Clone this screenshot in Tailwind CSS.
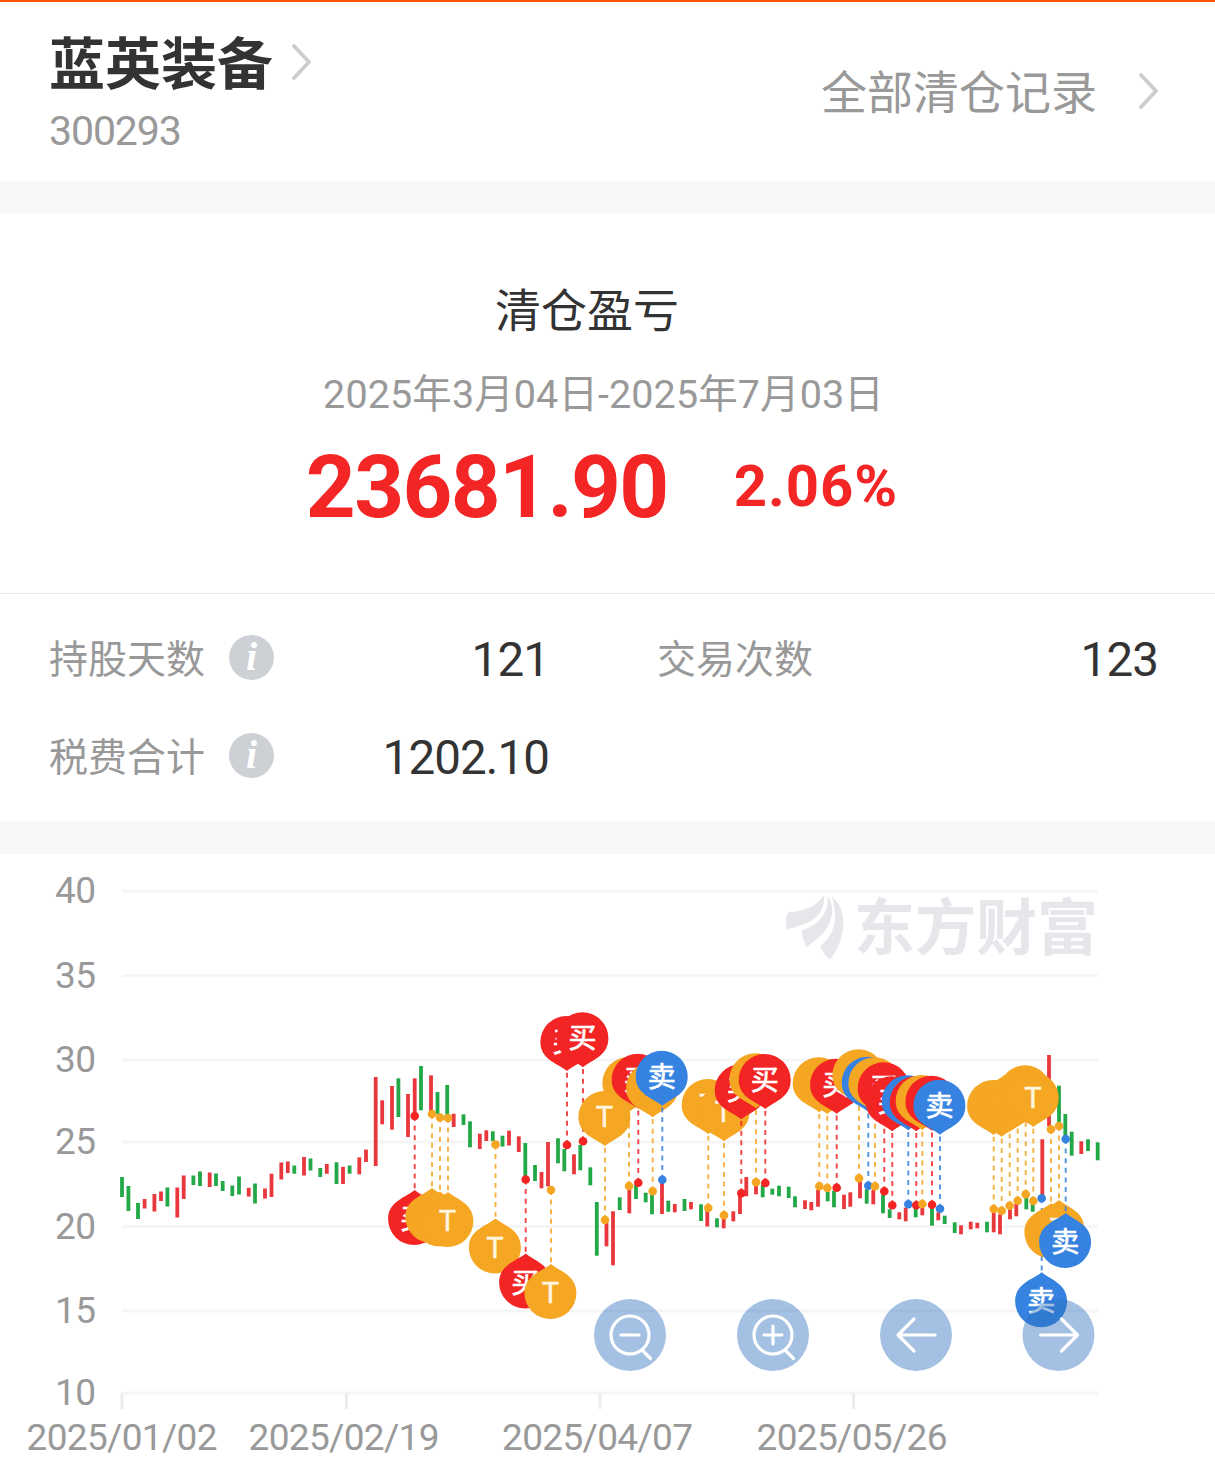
<!DOCTYPE html>
<html lang="zh-CN">
  <head>
    <meta charset="UTF-8" />
    <meta name="viewport" content="width=device-width, initial-scale=1.0" />
    <title>蓝英装备 300293</title>
    <script src="https://cdn.jsdelivr.net/npm/@tailwindcss/browser@4"></script>
  </head>
  <body class="bg-white text-[#333333] font-['Roboto','Noto_Sans_CJK_SC',sans-serif]">
    <header class="h-[181px] border-t-2 border-[#ff5500] pl-[49px] pr-[56px] flex justify-between">
      <div class="pt-[28px]">
        <a href="#" class="flex items-center gap-[19px]">
          <h1 class="text-[56px] leading-[60px] font-bold font-['Noto_Sans_CJK_SC',sans-serif]">蓝英装备</h1>
          <svg class="w-[20px] h-[36px] mt-1" viewBox="0 0 20 36" fill="none" stroke="#cccccc" stroke-width="3.8">
            <path d="M2 2 17 18 2 34" stroke-linecap="round" stroke-linejoin="round" />
          </svg>
        </a>
        <p class="mt-[16px] text-[41px] leading-[50px] tracking-[-1.1px] text-[#999999]">300293</p>
      </div>
      <a href="#" class="h-[178px] flex items-center gap-[42px] text-[#999999]">
        <span class="-mt-1 text-[46px] leading-[46px] font-['Noto_Sans_CJK_SC',sans-serif]">全部清仓记录</span>
        <svg class="w-[20px] h-[36px]" viewBox="0 0 20 36" fill="none" stroke="#cccccc" stroke-width="3.8">
          <path d="M2 2 17 18 2 34" stroke-linecap="round" stroke-linejoin="round" />
        </svg>
      </a>
    </header>

    <div class="h-8 bg-[#f7f7f7]"></div>

    <section class="h-[381px] border-b border-[#ececec] flex flex-col items-center pt-[69px]">
      <h2 class="mr-[41px] text-[46px] leading-[50px] font-['Noto_Sans_CJK_SC',sans-serif]">清仓盈亏</h2>
      <p class="mr-[8px] mt-[38px] text-[39.5px] leading-[50px] tracking-[0.1px] text-[#999999] whitespace-nowrap">2025年3月04日-2025年7月03日</p>
      <div class="mr-[11px] mt-[19px] flex items-center gap-[66px] text-[#f32525] font-bold">
        <span class="text-[87px] leading-[96px] tracking-[-1.6px]">23681.90</span>
        <span class="-mt-[3px] text-[58px] leading-[96px] tracking-[1px]">2.06%</span>
      </div>
    </section>

    <section class="h-[227px] pl-[49px] pr-[50px] pt-[14px] flex flex-col">
      <div class="flex h-[98px] items-center">
        <div class="w-[500px] flex items-center">
          <span class="mt-[5px] text-[39px] leading-[50px] text-[#999999]">持股天数</span>
          <span class="ml-[24px] size-[45px] rounded-full bg-[#cdd0d5] flex items-center justify-center text-white text-[40px] leading-[40px] font-bold italic font-['Liberation_Serif',serif]">i</span>
          <span class="ml-auto mt-[5px] text-[47.5px] leading-[50px] tracking-[-0.9px]">121</span>
        </div>
        <div class="ml-[108px] flex-1 flex items-center justify-between">
          <span class="mt-[5px] text-[39px] leading-[50px] text-[#999999]">交易次数</span>
          <span class="mt-[5px] mr-[7px] text-[47.5px] leading-[50px] tracking-[-0.9px]">123</span>
        </div>
      </div>
      <div class="flex h-[98px] items-center">
        <div class="w-[500px] flex items-center">
          <span class="mt-[5px] text-[39px] leading-[50px] text-[#999999]">税费合计</span>
          <span class="ml-[24px] size-[45px] rounded-full bg-[#cdd0d5] flex items-center justify-center text-white text-[40px] leading-[40px] font-bold italic font-['Liberation_Serif',serif]">i</span>
          <span class="ml-auto mt-[5px] text-[47.5px] leading-[50px] tracking-[-0.9px]">1202.10</span>
        </div>
      </div>
    </section>

    <div class="h-[33px] bg-[#f7f7f7]"></div>

    <svg id="chart" class="block w-[1215px] h-[627px]" viewBox="0 854 1215 627"></svg>

    <script>
      const RED = "#e8383d";
      const GREEN = "#22a847";

      // [x, top, bottom, up]
      const candles = [
        [122, 1177, 1197, 0], [128.4, 1186, 1211, 0], [138, 1203, 1219, 0], [144.6, 1199, 1208.5, 1],
        [154.4, 1194, 1211.5, 1], [161, 1191.5, 1201, 1], [167.4, 1187.5, 1206.5, 0], [177.3, 1187.5, 1217.5, 1],
        [183.7, 1175.5, 1199, 1], [193.4, 1175.5, 1185, 0], [200, 1171.5, 1186, 0], [209.7, 1172.5, 1187, 1],
        [216, 1173.5, 1186, 0], [222.7, 1181, 1191, 0], [232.3, 1185.5, 1196, 0], [239, 1176.5, 1194.5, 0],
        [248.7, 1187.8, 1196.6, 1], [255, 1183.5, 1203.5, 0], [265, 1188.5, 1198.5, 1], [271.5, 1173.7, 1197, 1],
        [281.3, 1162.5, 1179.5, 1], [287.8, 1161.5, 1173, 1], [294.3, 1165.5, 1173.7, 0], [304, 1157, 1175.5, 1],
        [310.5, 1158.5, 1170.5, 0], [320.3, 1168, 1177, 0], [326.8, 1164, 1173.8, 1], [336.5, 1162.3, 1184, 0],
        [343, 1166.8, 1184, 1], [349.6, 1165.5, 1173.7, 0], [359.3, 1157.4, 1174.3, 1], [366, 1149.6, 1162, 1],
        [375.7, 1077, 1166, 1], [382.2, 1100.3, 1124.3, 1], [392, 1086, 1129.7, 1], [398.4, 1078.3, 1117, 0],
        [408, 1094, 1137, 1], [414.7, 1078.3, 1115, 1], [421, 1066, 1110.3, 0], [431, 1075.3, 1113, 1],
        [437.5, 1092, 1114, 0], [447.2, 1085, 1115, 0], [453.7, 1113.7, 1127, 1], [463.5, 1114.3, 1125, 0],
        [470, 1121.3, 1147.3, 0], [479.8, 1133.7, 1149, 1], [486.3, 1130.3, 1141, 1], [492.8, 1131.3, 1141, 0],
        [502.5, 1135.7, 1146.5, 0], [509, 1130.7, 1145.5, 1], [518.8, 1136.3, 1152, 1], [525.3, 1143, 1176.7, 0],
        [535, 1165, 1181, 0], [541.5, 1172, 1188.3, 1], [548, 1142, 1186.3, 1], [558, 1138.3, 1163.3, 0],
        [564.3, 1149, 1171.3, 0], [574, 1154.3, 1174.3, 1], [580.3, 1145, 1170.3, 0], [590.3, 1167.3, 1185.3, 0],
        [596.8, 1202, 1255.7, 0], [606.5, 1222.7, 1246.3, 1], [613, 1211.3, 1265.3, 1], [619.7, 1197.3, 1210, 0],
        [629.3, 1189.3, 1213.3, 1], [636, 1185, 1199, 0], [645.7, 1192.7, 1202.3, 0], [652, 1193.3, 1214.3, 0],
        [662, 1181.7, 1214, 1], [668.3, 1200.7, 1211.7, 0], [674.8, 1204, 1212.3, 1], [684.5, 1199, 1211, 0],
        [691, 1202, 1209.3, 1], [701, 1204.3, 1221, 0], [707.3, 1210, 1226.5, 1], [717, 1218.3, 1227.3, 0],
        [723.7, 1218.3, 1228.3, 1], [733.3, 1211.3, 1221.3, 1], [740, 1196, 1214, 1], [746.3, 1177, 1196.3, 1],
        [756, 1183.3, 1194.3, 1], [762.7, 1185, 1197.3, 0], [772.3, 1188.7, 1194.7, 0], [779, 1185.7, 1196.3, 0],
        [788.7, 1186.7, 1198, 0], [795, 1196.3, 1207.3, 0], [805, 1200.3, 1209, 1], [811.3, 1202, 1210.3, 1],
        [818, 1190, 1206.7, 1], [827.7, 1191.7, 1201.3, 0], [834, 1190.7, 1207.3, 0], [844, 1194.7, 1209, 1],
        [850.3, 1192.3, 1206.7, 1], [860, 1181.7, 1198.3, 1], [866.7, 1189.3, 1203.7, 0], [873.3, 1190, 1204.3, 1],
        [883, 1195, 1213.3, 0], [889.7, 1209.3, 1218, 0], [899.3, 1212.3, 1219.3, 1], [905.7, 1207.7, 1221.3, 1],
        [915.7, 1209, 1217.3, 0], [922.3, 1207.7, 1215.3, 1], [932, 1207.7, 1225.7, 0], [938.3, 1212.3, 1220.3, 1],
        [944.7, 1215.7, 1224, 0], [954.7, 1222.3, 1233, 0], [961, 1225.3, 1234.3, 1], [970.7, 1221.7, 1229.3, 1],
        [977.3, 1222.7, 1228.3, 1], [987, 1221.7, 1232.3, 0], [993.7, 1212.7, 1232.3, 1], [1000, 1214.3, 1234.3, 1],
        [1010, 1209.3, 1219.3, 1], [1016.3, 1204, 1216.3, 1], [1026.3, 1196.7, 1209.3, 0], [1032.7, 1203.3, 1211.7, 0],
        [1042.3, 1139.3, 1196, 1], [1049, 1055, 1126, 1], [1059, 1085.7, 1123.3, 0], [1065.3, 1114, 1136.7, 0],
        [1071.7, 1131.7, 1155.7, 0], [1081.3, 1141.3, 1154, 1], [1088, 1139.3, 1151, 0], [1097.7, 1142.3, 1160.3, 0],
      ];

      const kinds = {
        B: { label: "买", fill: "#f32424" },
        S: { label: "卖", fill: "#3682e0" },
        T: { label: "T", fill: "#f5a623" },
      };

      // [kind, x, y, side]: side 1 hangs below the candle, -1 floats above it
      const pins = [
        ["B", 414.7, 1116, 1], ["T", 432, 1114, 1], ["T", 440, 1117.5, 1], ["T", 448, 1118, 1],
        ["T", 495.5, 1144.5, 1], ["B", 525.7, 1179.5, 1], ["T", 551, 1190, 1],
        ["B", 567, 1145, -1], ["B", 583, 1141.3, -1],
        ["T", 629, 1186, -1], ["T", 605, 1220, -1], ["B", 638.3, 1182.7, -1], ["T", 652.7, 1191.3, -1], ["S", 662.3, 1179.7, -1],
        ["T", 708.3, 1208, -1], ["T", 724, 1215.3, -1], ["B", 741.3, 1193.3, -1], ["T", 756, 1182.3, -1], ["B", 765.3, 1183, -1],
        ["T", 819.3, 1186.3, -1], ["T", 827.3, 1188, -1], ["B", 836.7, 1187.7, -1],
        ["T", 859, 1178.3, -1], ["S", 868.3, 1185.7, -1], ["T", 875, 1186.3, -1], ["B", 884.3, 1191.3, -1], ["B", 892.3, 1205.3, -1],
        ["S", 908.3, 1204.3, -1], ["B", 916.3, 1205.3, -1], ["T", 922.3, 1204, -1], ["B", 932, 1204.7, -1], ["S", 940, 1208.7, -1],
        ["T", 993.7, 1209, -1], ["T", 1001.7, 1210.7, -1], ["T", 1009.7, 1205.7, -1], ["T", 1017.7, 1200.7, -1],
        ["T", 1025.7, 1194.3, -1], ["T", 1033.3, 1201, -1],
        ["S", 1041.7, 1198.3, 1], ["T", 1051, 1129.3, 1], ["T", 1059, 1126, 1], ["S", 1065.7, 1139, 1],
      ];

      const yAxis = [[40, 891], [35, 975.7], [30, 1060], [25, 1142], [20, 1226.5], [15, 1311], [10, 1393]];
      const xAxis = [["2025/01/02", 122, 122], ["2025/02/19", 346.5, 344], ["2025/04/07", 600, 597.5], ["2025/05/26", 853.5, 852]];

      let out = "";

      yAxis.forEach(([v, y]) => {
        out += `<rect x="122" y="${y - 1.5}" width="976" height="3" fill="#f5f5f6" />`;
        out += `<text x="96" y="${y + 12}" text-anchor="end" font-size="37" fill="#999999" textLength="41">${v}</text>`;
      });
      xAxis.forEach(([label, tick, x]) => {
        out += `<rect x="${tick - 1.5}" y="1393" width="3" height="16" fill="#ececee" />`;
        out += `<text x="${x}" y="1450" text-anchor="middle" font-size="37" fill="#999999" textLength="191">${label}</text>`;
      });

      // watermark
      out += `
        <g fill="#e6e6eb">
          <g transform="translate(770 870) scale(.3333)">
            <path d="M51 180C46 160 47 136 56 127C95 125 140 113 161 76C168 105 150 143 110 160C90 168 70 171 51 180Z" />
            <path d="M173 79C196 110 190 152 160 188C148 203 128 214 112 232C100 215 94 195 96 181C142 168 178 130 173 79Z" />
            <path d="M186 81C216 104 229 152 214 202C206 230 192 253 180 270C165 255 152 240 151 227C190 200 207 150 186 81Z" />
          </g>
          <text x="854" y="950" font-family="Noto Sans CJK SC, sans-serif" font-size="61" font-weight="700" textLength="244">东方财富</text>
        </g>`;

      candles.forEach(([x, top, bottom, up]) => {
        out += `<rect x="${x - 1.9}" y="${top}" width="3.8" height="${bottom - top}" fill="${up ? RED : GREEN}" />`;
      });

      pins.forEach(([kind, x, y, side]) => {
        const k = kinds[kind];
        const tip = y + 74 * side;
        const cy = tip + 29 * side;
        const s = side;
        const cx = x - 0.6;
        out += `<path d="M${x} ${y}V${tip}" stroke="${k.fill}" stroke-width="1.9" stroke-dasharray="5 4.6" opacity=".85" />`;
        out += `<circle cx="${x}" cy="${y}" r="4.3" fill="${k.fill}" />`;
        out += `<path fill="${k.fill}" d="M${x} ${tip}C${x + 8} ${tip + 7 * s} ${cx + 26} ${cy - 18 * s} ${cx + 26} ${cy}
          A26 26 0 0 ${s > 0 ? 1 : 0} ${cx - 26} ${cy}C${cx - 26} ${cy - 18 * s} ${x - 8} ${tip + 7 * s} ${x} ${tip}Z" />`;
        out += kind === "T"
          ? `<text x="${x - 0.5}" y="${cy + 10}" text-anchor="middle" font-size="29" fill="#fff6e0" stroke="#fff6e0" stroke-width=".5">T</text>`
          : `<text x="${x - 0.5}" y="${cy + 10}" text-anchor="middle" font-family="Noto Sans CJK SC, sans-serif" font-size="28" fill="#ffffff" stroke="#ffffff" stroke-width=".7">${k.label}</text>`;
      });

      const icons = [
        [630, '<circle r="19" cx="0" cy="0" /><path d="M-9 0H9M12 15 20.5 23.5" />'],
        [773, '<circle r="19" cx="0" cy="0" /><path d="M-9 0H9M0 -9V9M12 15 20.5 23.5" />'],
        [916, '<path d="M19 0H-18M-2 -16-18 0-2 16" />'],
        [1058.5, '<path d="M-18 0H19M3 -16 19 0 3 16" />'],
      ];
      icons.forEach(([x, d]) => {
        out += `<g transform="translate(${x} 1335)"><circle r="36" fill="#2d70be" fill-opacity=".433" />
          <g fill="none" stroke="#ffffff" stroke-width="3.2" stroke-linecap="round" stroke-linejoin="round">${d}</g></g>`;
      });

      document.getElementById("chart").innerHTML = out;
    </script>
  </body>
</html>
